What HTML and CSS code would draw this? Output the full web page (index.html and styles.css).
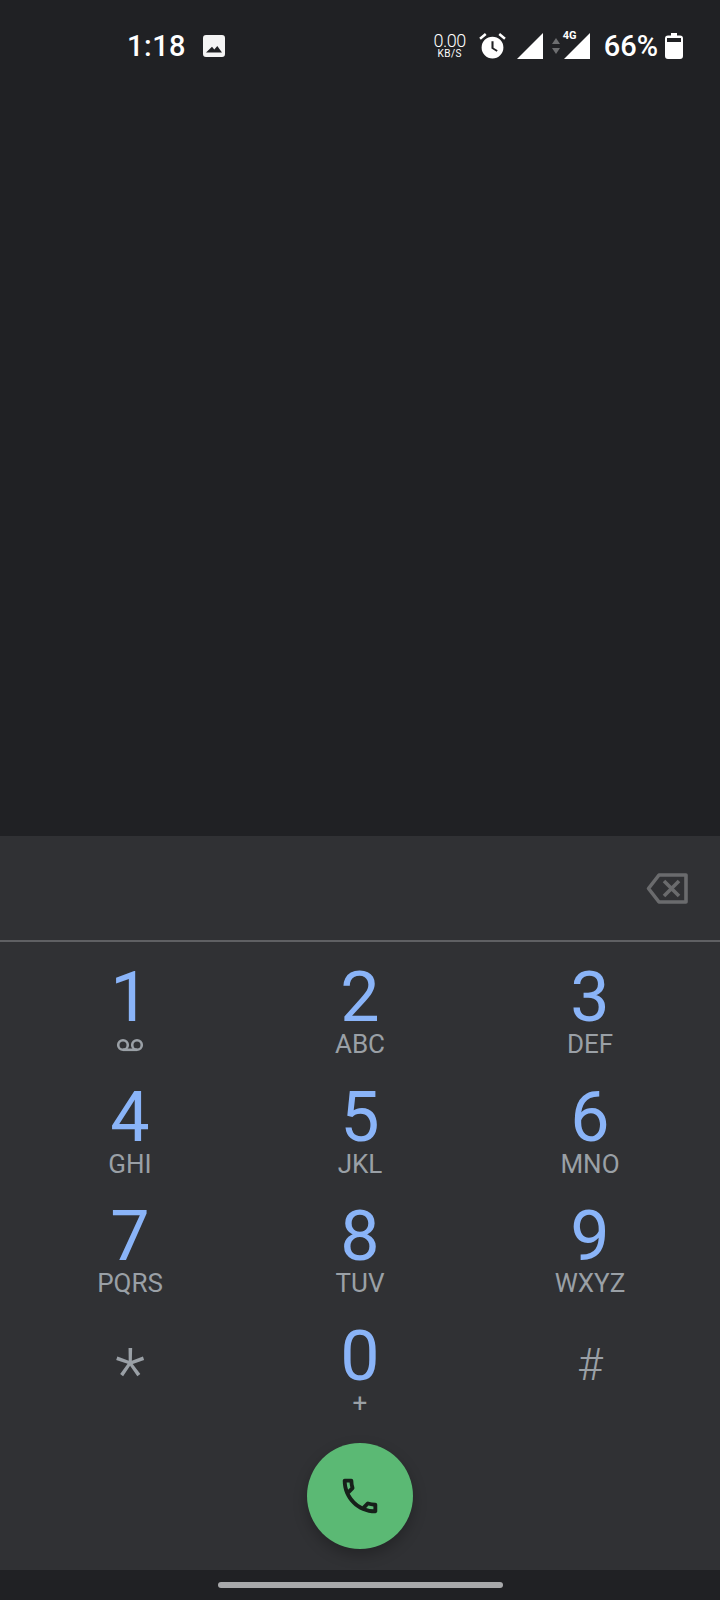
FILE: index.html
```html
<!DOCTYPE html>
<html lang="en">
<head>
    <meta charset="UTF-8">
    <meta name="viewport" content="width=device-width, initial-scale=1.0">
    <title>Phone</title>
    <link rel="stylesheet" href="styles.css">
</head>
<body>
    <div class="screen">
        <header class="status-bar">
            <span class="clock">1:18</span>
            <svg class="icon-image" viewBox="0 0 22 22"><path fill="#f4f4f4" fill-rule="evenodd" d="M3 0h16a3 3 0 0 1 3 3v16a3 3 0 0 1-3 3H3a3 3 0 0 1-3-3V3a3 3 0 0 1 3-3zM3 17.500h16l-4.700-6.500-3 3.500-2.300-2.700z"/></svg>
            <div class="status-right">
                <div class="speed">
                    <span class="speed-value">0.00</span>
                    <span class="speed-unit">KB/S</span>
                </div>
                <svg class="icon-alarm" viewBox="0 0 26 26"><path fill="#fff" fill-rule="evenodd" d="M13 4.500a10.500 10.500 0 1 1 0 21 10.500 10.500 0 0 1 0-21zM12 9v7l5 3 1-1.500-4-2.400V9z"/><path fill="none" stroke="#fff" stroke-width="2.400" d="M1 6.500 6.500 2M25 6.500 19.500 2"/></svg>
                <svg class="icon-signal" viewBox="0 0 26 26"><path fill="#fff" d="M26 0v26H0z"/></svg>
                <svg class="icon-arrows" viewBox="0 0 10 18"><path fill="#6d6e70" d="M5 1l4 6H1zM5 17l-4-6h8z"/></svg>
                <div class="signal-4g">
                    <span class="label-4g">4G</span>
                    <svg class="icon-signal" viewBox="0 0 26 26"><path fill="#fff" d="M26 0v26H0z"/></svg>
                </div>
                <span class="battery-text">66%</span>
                <svg class="icon-battery" viewBox="0 0 18 26"><path fill="#fff" fill-rule="evenodd" d="M6 0h6v2.500h3a3 3 0 0 1 3 3V23a3 3 0 0 1-3 3H3a3 3 0 0 1-3-3V5.500a3 3 0 0 1 3-3h3zM2 5v4h14V5z"/></svg>
            </div>
        </header>

        <main class="history"></main>

        <section class="dialer">
            <div class="number-row">
                <svg class="icon-backspace" viewBox="0 0 42 31"><path fill="none" stroke="#6a6b6d" stroke-width="3.600" stroke-linejoin="round" d="M13 2h27v27H13L2.500 15.500z"/><path fill="none" stroke="#6a6b6d" stroke-width="3.600" d="M18 8l15 15M33 8 18 23"/></svg>
            </div>
            <div class="keypad">
                <div class="key">
                    <span class="digit">1</span>
                    <svg class="icon-voicemail" viewBox="0 0 28 14"><circle cx="7" cy="7" r="4.800" fill="none" stroke="#9aa0a6" stroke-width="2.600"/><circle cx="21" cy="7" r="4.800" fill="none" stroke="#9aa0a6" stroke-width="2.600"/><path fill="none" stroke="#9aa0a6" stroke-width="2.600" d="M7 11.800h14"/></svg>
                </div>
                <div class="key"><span class="digit">2</span><span class="letters">ABC</span></div>
                <div class="key"><span class="digit">3</span><span class="letters">DEF</span></div>
                <div class="key"><span class="digit">4</span><span class="letters">GHI</span></div>
                <div class="key"><span class="digit">5</span><span class="letters">JKL</span></div>
                <div class="key"><span class="digit">6</span><span class="letters">MNO</span></div>
                <div class="key"><span class="digit">7</span><span class="letters">PQRS</span></div>
                <div class="key"><span class="digit">8</span><span class="letters">TUV</span></div>
                <div class="key"><span class="digit">9</span><span class="letters">WXYZ</span></div>
                <div class="key"><span class="digit symbol">*</span></div>
                <div class="key"><span class="digit">0</span><span class="letters">+</span></div>
                <div class="key"><span class="digit symbol hash">#</span></div>
            </div>
            <div class="call-row">
                <button class="call-button">
                    <svg class="icon-call" viewBox="0 0 24 24"><path fill="#17201a" d="M6.540 5c.060.890.210 1.760.450 2.590l-1.200 1.200c-.410-1.200-.670-2.470-.760-3.790h1.510m9.860 12.020c.850.240 1.720.390 2.600.450v1.490c-1.320-.090-2.590-.350-3.800-.750l1.200-1.190M7.500 3H4c-.550 0-1 .450-1 1 0 9.390 7.610 17 17 17 .550 0 1-.450 1-1v-3.490c0-.550-.450-1-1-1-1.240 0-2.450-.200-3.570-.570-.100-.040-.210-.050-.310-.050-.260 0-.510.100-.710.290l-2.200 2.200c-2.830-1.450-5.150-3.760-6.590-6.590l2.200-2.200c.280-.280.360-.670.250-1.020C8.700 6.450 8.500 5.250 8.500 4c0-.550-.45-1-1-1z"/></svg>
                </button>
            </div>
        </section>

        <footer class="nav-bar">
            <div class="nav-handle"></div>
        </footer>
    </div>
</body>
</html>
```

FILE: styles.css
```css
* {
    box-sizing: border-box;
}
html, body {
    margin: 0;
    padding: 0;
}
body {
    background-color: #202124;
    font-family: Roboto, "Noto Sans", sans-serif;
}
.screen {
    width: 720px;
    height: 1600px;
    display: flex;
    flex-direction: column;
    overflow: hidden;
}
.status-bar {
    height: 91px;
    flex-shrink: 0;
    display: flex;
    align-items: center;
    padding: 0 37px 0 127px;
    color: #fff;
}
.clock {
    font-size: 29px;
    font-weight: 500;
    letter-spacing: 0.5px;
}
.icon-image {
    width: 22px;
    height: 22px;
    margin-left: 17px;
}
.status-right {
    margin-left: auto;
    display: flex;
    align-items: center;
}
.speed {
    display: flex;
    flex-direction: column;
    align-items: center;
    width: 30px;
}
.speed-value {
    font-size: 18px;
    font-weight: 300;
    line-height: 16px;
    letter-spacing: -0.5px;
}
.speed-unit {
    font-size: 10px;
    line-height: 10px;
    letter-spacing: 0.5px;
}
.icon-alarm {
    width: 27px;
    height: 27px;
    margin-left: 14px;
}
.icon-signal {
    width: 26px;
    height: 26px;
    display: block;
}
.status-right > .icon-signal {
    margin-left: 11px;
}
.icon-arrows {
    width: 10px;
    height: 18px;
    margin-left: 8px;
}
.signal-4g {
    position: relative;
    margin-left: 3px;
}
.label-4g {
    position: absolute;
    top: -3px;
    left: -1px;
    font-size: 11px;
    font-weight: 700;
    line-height: 12px;
}
.battery-text {
    font-size: 29px;
    font-weight: 500;
    margin-left: 14px;
}
.icon-battery {
    width: 18px;
    height: 26px;
    margin-left: 7px;
}
.history {
    flex: 1;
}
.dialer {
    height: 734px;
    flex-shrink: 0;
    background-color: #303134;
    display: flex;
    flex-direction: column;
}
.number-row {
    height: 106px;
    flex-shrink: 0;
    border-bottom: 2px solid #5f6063;
    display: flex;
    align-items: center;
    justify-content: flex-end;
    padding-right: 32px;
}
.icon-backspace {
    width: 42px;
    height: 31px;
}
.keypad {
    display: grid;
    grid-template-columns: repeat(3, 230px);
    grid-auto-rows: 119.700px;
    padding: 22px 15px 0;
}
.key {
    display: flex;
    flex-direction: column;
    align-items: center;
}
.digit {
    font-size: 70px;
    line-height: 66px;
    color: #8ab4f8;
}
.symbol {
    font-weight: 300;
    color: #9aa0a6;
    padding-top: 18px;
}
.hash {
    font-size: 44px;
    padding-top: 9px;
}
.letters {
    font-size: 26px;
    line-height: 28px;
    color: #9aa0a6;
}
.icon-voicemail {
    width: 28px;
    height: 14px;
    margin-top: 8px;
}
.call-row {
    display: flex;
    justify-content: center;
}
.call-button {
    width: 106px;
    height: 106px;
    border: none;
    padding: 0;
    border-radius: 50%;
    background-color: #5bb974;
    box-shadow: 0 6px 14px rgba(0, 0, 0, 0.25);
    display: flex;
    align-items: center;
    justify-content: center;
}
.icon-call {
    width: 46px;
    height: 46px;
}
.nav-bar {
    height: 30px;
    flex-shrink: 0;
    display: flex;
    justify-content: center;
    align-items: flex-start;
    padding-top: 12px;
}
.nav-handle {
    width: 285px;
    height: 6px;
    border-radius: 3px;
    background-color: #a8a9ab;
}
```
